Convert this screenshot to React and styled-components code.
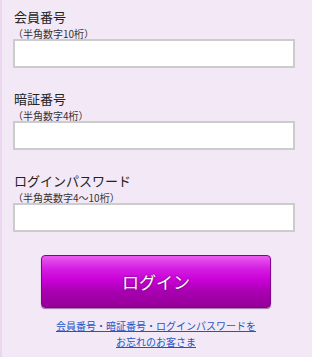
import styled, { createGlobalStyle } from "styled-components";

const GlobalStyle = createGlobalStyle`
  html, body {
    margin: 0;
    padding: 0;
    background: #f3e9f6;
  }
  body {
    font-family: "Noto Sans CJK JP", "Noto Sans", sans-serif;
    color: #222;
  }
`;

const fields = [
  { label: "会員番号", note: "（半角数字10桁）", type: "text" },
  { label: "暗証番号", note: "（半角数字4桁）", type: "password" },
  { label: "ログインパスワード", note: "（半角英数字4～10桁）", type: "password" },
];

export default function App() {
  return (
    <>
      <GlobalStyle />
      <Page>
        <Form>
          {fields.map((f) => (
            <Field key={f.label}>
              <Label>{f.label}</Label>
              <Note>{f.note}</Note>
              <Input type={f.type} />
            </Field>
          ))}
          <LoginButton type="button">ログイン</LoginButton>
          <HelpLink href="#">
            会員番号・暗証番号・ログインパスワードを
            <br />
            お忘れのお客さま
          </HelpLink>
        </Form>
      </Page>
    </>
  );
}

const Page = styled.div`
  width: 312px;
  height: 357px;
  box-sizing: border-box;
  background: #f3e9f6;
  border-left: 2px solid #ead7ee;
  overflow: hidden;
`;

const Form = styled.div`
  display: flex;
  flex-direction: column;
  padding: 8px 15px 0 11px;
`;

const Field = styled.div`
  display: flex;
  flex-direction: column;
  margin-bottom: 22px;
`;

const Label = styled.div`
  font-size: 13px;
  line-height: 17px;
  padding: 0 0 3px 1px;
  color: #222;
`;

const Note = styled.div`
  font-size: 10px;
  line-height: 11px;
  color: #333;
`;

const Input = styled.input`
  box-sizing: border-box;
  width: 282px;
  height: 29px;
  margin: 0;
  border: 2px solid #cccccc;
  background: #fff;
  outline: none;
`;

const LoginButton = styled.button`
  align-self: center;
  box-sizing: border-box;
  width: 230px;
  height: 53px;
  margin: 1px 0 0 2px;
  border: 1px solid #85008f;
  border-radius: 4px;
  background: linear-gradient(
    to bottom,
    #ea5cf0 0%,
    #d41ee2 25%,
    #c800d6 48%,
    #a800b0 70%,
    #960099 100%
  );
  box-shadow: 0 1px 1px rgba(80, 0, 90, 0.5);
  color: #fff;
  font-family: "Noto Sans CJK JP", sans-serif;
  font-size: 17px;
  text-shadow: 0 0 2px rgba(60, 0, 60, 0.8);
`;

const HelpLink = styled.a`
  align-self: center;
  margin: 10px 0 0 2px;
  font-size: 10px;
  line-height: 16px;
  text-align: center;
  color: #1f55c4;
  text-decoration: underline;
`;
